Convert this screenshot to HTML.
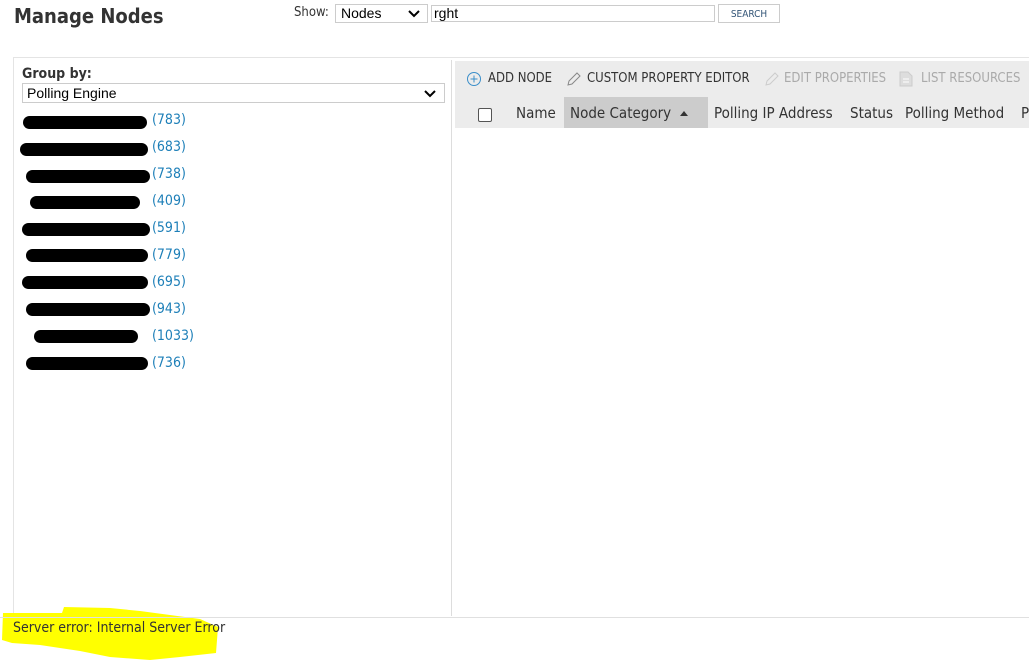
<!DOCTYPE html>
<html><head><style>
body{margin:0;width:1029px;height:660px;background:#fff;position:relative;overflow:hidden;font-family:"Liberation Sans",sans-serif;}
.a{position:absolute;white-space:nowrap}
.t{font-family:"DejaVu Sans Condensed","Liberation Sans",sans-serif;}
.item{position:absolute;font-size:14px;color:#1d7fb8;font-family:"DejaVu Sans Condensed",sans-serif}
.blob{position:absolute;background:#000;border-radius:8px;height:13px}
.h{position:absolute;top:104px;font-size:15px;color:#333;font-family:"DejaVu Sans Condensed",sans-serif;white-space:nowrap}
.tb{position:absolute;top:71px;font-size:13px;font-family:"DejaVu Sans Condensed",sans-serif;white-space:nowrap}
</style></head><body>
<div class="a t" style="left:14px;top:4px;font-size:20px;font-weight:bold;color:#333">Manage Nodes</div>
<div class="a t" style="left:294px;top:5px;font-size:13px;color:#333">Show:</div>
<div class="a" style="left:335px;top:4px;width:93px;height:19px;border:1px solid #ccc;font-size:14px;line-height:17px;padding-left:5px;box-sizing:border-box">Nodes<svg style="position:absolute;right:7px;top:5px" width="12" height="8"><path d="M1 1 L6 6 L11 1" stroke="#000" stroke-width="2" fill="none"/></svg></div>
<div class="a" style="left:431px;top:5px;width:284px;height:17px;border:1px solid #ccc;font-size:14px;line-height:15px;padding-left:2px;box-sizing:border-box">rght</div>
<div class="a t" style="left:718px;top:4px;width:62px;height:19px;border:1px solid #ccc;box-sizing:border-box;font-size:10px;color:#357;text-align:center;line-height:19px">SEARCH</div>

<div class="a" style="left:13px;top:57px;width:1020px;height:561px;border:1px solid #e4e4e4;box-sizing:border-box"></div>
<div class="a" style="left:451px;top:60px;width:1px;height:556px;background:#ddd"></div>
<div class="a t" style="left:22px;top:66px;font-size:14px;font-weight:bold;color:#333">Group by:</div>
<div class="a" style="left:22px;top:83px;width:423px;height:20px;border:1px solid #ccc;box-sizing:border-box;font-size:14px;line-height:18px;padding-left:4px">Polling Engine<svg style="position:absolute;right:8px;top:6px" width="12" height="8"><path d="M1 1 L6 6 L11 1" stroke="#000" stroke-width="2" fill="none"/></svg></div>

<div class="item" style="top:112px;left:152px">(783)</div>
<div class="item" style="top:139px;left:152px">(683)</div>
<div class="item" style="top:166px;left:152px">(738)</div>
<div class="item" style="top:193px;left:152px">(409)</div>
<div class="item" style="top:220px;left:152px">(591)</div>
<div class="item" style="top:247px;left:152px">(779)</div>
<div class="item" style="top:274px;left:152px">(695)</div>
<div class="item" style="top:301px;left:152px">(943)</div>
<div class="item" style="top:328px;left:152px">(1033)</div>
<div class="item" style="top:355px;left:152px">(736)</div>
<div class="blob" style="left:23px;top:116px;width:124px"></div>
<div class="blob" style="left:20px;top:143px;width:128px"></div>
<div class="blob" style="left:26px;top:170px;width:124px"></div>
<div class="blob" style="left:30px;top:196px;width:110px"></div>
<div class="blob" style="left:22px;top:223px;width:128px"></div>
<div class="blob" style="left:26px;top:249px;width:122px"></div>
<div class="blob" style="left:22px;top:276px;width:126px"></div>
<div class="blob" style="left:26px;top:303px;width:124px"></div>
<div class="blob" style="left:34px;top:330px;width:104px"></div>
<div class="blob" style="left:26px;top:357px;width:122px"></div>

<div class="a" style="left:455px;top:61px;width:580px;height:67px;background:#ececec"></div>
<svg class="a" style="left:466px;top:71px" width="16" height="16"><circle cx="8" cy="8" r="6.5" stroke="#3a8ec9" fill="none"/><path d="M8 4.5V11.5M4.5 8H11.5" stroke="#3a8ec9"/></svg>
<div class="tb" style="left:488px;color:#333">ADD NODE</div>
<svg class="a" style="left:566px;top:71px" width="16" height="16"><path d="M2 14 L3 10 L11 2 L14 5 L6 13 Z" stroke="#888" fill="none"/></svg>
<div class="tb" style="left:587px;color:#333">CUSTOM PROPERTY EDITOR</div>
<svg class="a" style="left:764px;top:71px" width="16" height="16"><path d="M2 14 L3 10 L11 2 L14 5 L6 13 Z" stroke="#ccc" fill="none"/></svg>
<div class="tb" style="left:784px;color:#aaa">EDIT PROPERTIES</div>
<svg class="a" style="left:899px;top:71px" width="14" height="16"><path d="M1 1H9L13 5V15H1Z" fill="#ddd" stroke="#ccc"/><path d="M4 8H10M4 11H10" stroke="#fff"/></svg>
<div class="tb" style="left:921px;color:#aaa">LIST RESOURCES</div>

<div class="a" style="left:564px;top:97px;width:144px;height:31px;background:#ccc"></div>
<div class="a" style="left:478px;top:108px;width:12px;height:12px;border:1px solid #555;border-radius:2px;background:#fff"></div>
<div class="h" style="left:516px">Name</div>
<div class="h" style="left:570px">Node Category</div>
<svg class="a" style="left:680px;top:111px" width="8" height="5"><path d="M0 5L4 0L8 5Z" fill="#333"/></svg>
<div class="h" style="left:714px">Polling IP Address</div>
<div class="h" style="left:850px">Status</div>
<div class="h" style="left:905px">Polling Method</div>
<div class="h" style="left:1021px">P</div>

<svg class="a" style="left:0;top:605px" width="230" height="55"><path d="M3 8 L62 8 L64 2 L110 3 L140 6 L200 14 L218 22 L216 48 L180 52 L150 55 L110 52 L80 46 L40 40 L12 38 L2 35 Z" fill="#ffff00"/></svg>
<div class="a" style="left:0;top:617px;width:1029px;height:1px;background:#e0e0e0"></div>
<div class="a t" style="left:13px;top:620px;font-size:14px;color:#333">Server error: Internal Server Error</div>
</body></html>
